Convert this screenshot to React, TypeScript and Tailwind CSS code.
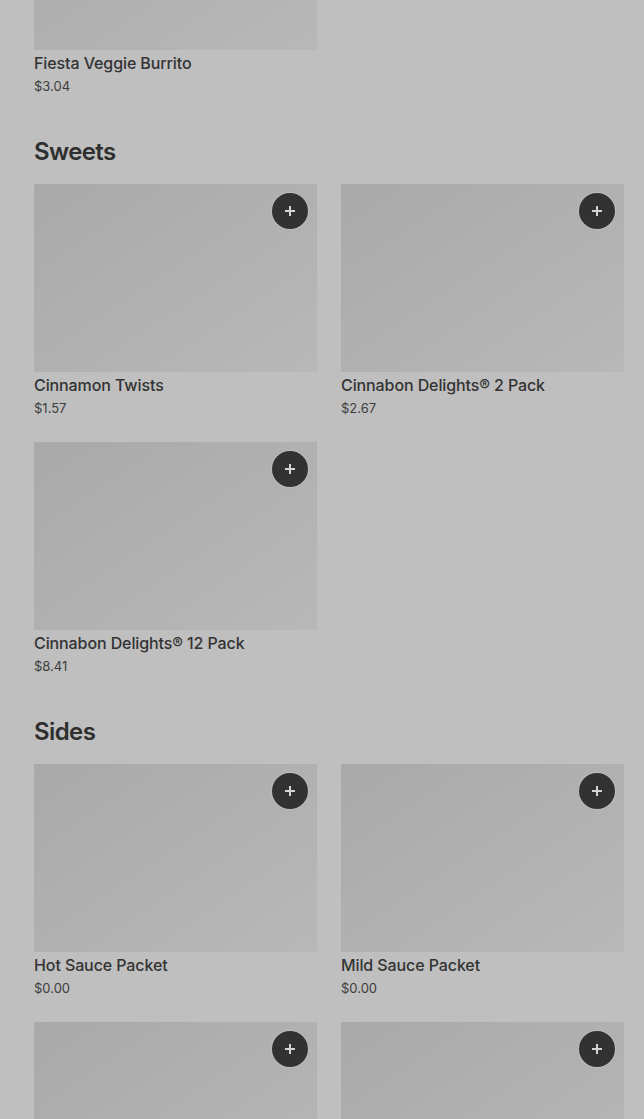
import React from "react";

type Item = { name?: string; price?: string };

const sections: { title?: string; items: Item[]; first?: boolean }[] = [
  { first: true, items: [{ name: "Fiesta Veggie Burrito", price: "$3.04" }] },
  {
    title: "Sweets",
    items: [
      { name: "Cinnamon Twists", price: "$1.57" },
      { name: "Cinnabon Delights® 2 Pack", price: "$2.67" },
      { name: "Cinnabon Delights® 12 Pack", price: "$8.41" },
    ],
  },
  {
    title: "Sides",
    items: [
      { name: "Hot Sauce Packet", price: "$0.00" },
      { name: "Mild Sauce Packet", price: "$0.00" },
      {},
      {},
    ],
  },
];

const ItemCard = ({ item, hideButton }: { item: Item; hideButton?: boolean }) => {
  return (
    <div className="flex flex-col">
      <div className="relative h-[188px] w-full bg-gradient-to-br from-[#a9a9a9] to-[#b8b8b8]">
        {!hideButton && (
          <button className="absolute right-[9px] top-[9px] flex h-9 w-9 items-center justify-center rounded-full bg-[#323232] shadow-[0_0_0_1px_rgba(200,200,200,0.5)]">
            <svg width="12" height="12" viewBox="0 0 12 12" fill="none">
              <path d="M6 1v10M1 6h10" stroke="#d4d4d4" strokeWidth="2" />
            </svg>
          </button>
        )}
      </div>
      {item.name && (
        <>
          <div className="pt-[3px] text-base leading-5 font-medium tracking-[-0.1px] text-[#333333]">{item.name}</div>
          <div className="mt-[3px] text-[13px] leading-5 text-[#3d3d3d]">{item.price}</div>
        </>
      )}
    </div>
  );
};

export default function App() {
  return (
    <div
      className="h-[1119px] w-full overflow-hidden bg-[#bfbfbf] pl-[34px] pr-5"
      style={{ fontFamily: "Inter, 'Noto Sans', sans-serif" }}
    >
      <div className="-mt-[138px] flex flex-col gap-10">
        {sections.map((s, i) => (
          <section key={i} className="flex flex-col gap-4">
            {s.title && (
              <h2 className="text-2xl leading-8 font-semibold tracking-tight text-[#2f2f2f]">{s.title}</h2>
            )}
            <div className="grid grid-cols-2 gap-x-6 gap-y-6">
              {s.items.map((it, j) => (
                <ItemCard key={j} item={it} hideButton={s.first} />
              ))}
            </div>
          </section>
        ))}
      </div>
    </div>
  );
}
